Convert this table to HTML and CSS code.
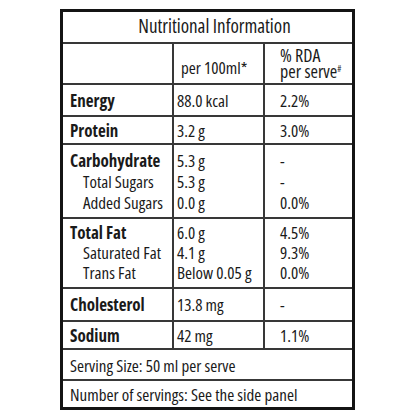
FILE: index.html
```html
<!DOCTYPE html>
<html>
<head>
<meta charset="utf-8">
<link rel="stylesheet" href="styles.css">
</head>
<body>
<div class="panel">
  <div class="title">Nutritional Information</div>
  <div class="row head">
    <div class="c1"></div>
    <div class="c2 hb">per 100ml*</div>
    <div class="c3 hr"><span>% RDA</span><span>per serve<span class="hash">#</span></span></div>
  </div>
  <div class="row r-energy">
    <div class="c1 b">Energy</div>
    <div class="c2">88.0 kcal</div>
    <div class="c3">2.2%</div>
  </div>
  <div class="row r-protein">
    <div class="c1 b">Protein</div>
    <div class="c2">3.2 g</div>
    <div class="c3">3.0%</div>
  </div>
  <div class="row r-carb multi">
    <div class="c1"><span class="b">Carbohydrate</span><span class="sub">Total Sugars</span><span class="sub">Added Sugars</span></div>
    <div class="c2"><span>5.3 g</span><span>5.3 g</span><span>0.0 g</span></div>
    <div class="c3"><span>-</span><span>-</span><span>0.0%</span></div>
  </div>
  <div class="row r-fat multi">
    <div class="c1"><span class="b">Total Fat</span><span class="sub">Saturated Fat</span><span class="sub">Trans Fat</span></div>
    <div class="c2"><span>6.0 g</span><span>4.1 g</span><span>Below 0.05 g</span></div>
    <div class="c3"><span>4.5%</span><span>9.3%</span><span>0.0%</span></div>
  </div>
  <div class="row r-chol">
    <div class="c1 b">Cholesterol</div>
    <div class="c2">13.8 mg</div>
    <div class="c3">-</div>
  </div>
  <div class="row r-sodium">
    <div class="c1 b">Sodium</div>
    <div class="c2">42 mg</div>
    <div class="c3">1.1%</div>
  </div>
  <div class="full r-serving">Serving Size: 50 ml per serve</div>
  <div class="full r-number">Number of servings: See the side panel</div>
</div>
</body>
</html>
```
FILE: styles.css
```css
html, body {
  margin: 0;
  padding: 0;
  background: #ffffff;
}
body {
  font-family: "Open Sans", "Roboto Condensed", sans-serif;
  font-stretch: 75%;
  font-weight: 500;
  font-size: 17px;
  color: #1a1a1a;
  padding: 9px 0 0 60px;
}
.panel {
  width: 295px;
  box-sizing: border-box;
  border: 3px solid #141414;
  display: flex;
  flex-direction: column;
}
.title {
  height: 32px;
  box-sizing: border-box;
  border-bottom: 2px solid #383838;
  text-align: center;
  font-size: 19px;
  line-height: 28px;
  padding-left: 14px;
}
.row {
  display: grid;
  grid-template-columns: 111px 91px 1fr;
  border-bottom: 2px solid #383838;
  box-sizing: border-box;
}
.row > div {
  display: flex;
  flex-direction: column;
  justify-content: center;
  white-space: nowrap;
}
.c1 {
  padding-left: 7px;
  border-right: 2px solid #383838;
}
.c2 {
  padding-left: 3px;
  border-right: 2px solid #383838;
}
.c3 {
  padding-left: 15px;
}
.b {
  font-weight: 700;
}
.sub {
  padding-left: 13px;
}
.head { height: 41px; }
.head .hb { justify-content: flex-end; padding-bottom: 6px; padding-left: 7px; line-height: 18px; }
.head .hr { line-height: 16px; font-size: 18px; padding-top: 2px; }
.hash { font-size: 9px; position: relative; top: -6px; }
.r-energy { height: 32px; }
.r-protein { height: 28px; }
.r-carb { height: 74px; }
.r-fat { height: 70px; }
.r-chol { height: 33px; }
.r-sodium { height: 28px; }
.r-carb span { line-height: 21px; }
.r-fat span { line-height: 20px; }
.multi span { display: block; }
.full {
  box-sizing: border-box;
  padding-left: 7px;
  display: flex;
  align-items: center;
}
.r-serving { height: 31px; border-bottom: 2px solid #383838; padding-top: 2px; }
.r-number { height: 26px; }
```
